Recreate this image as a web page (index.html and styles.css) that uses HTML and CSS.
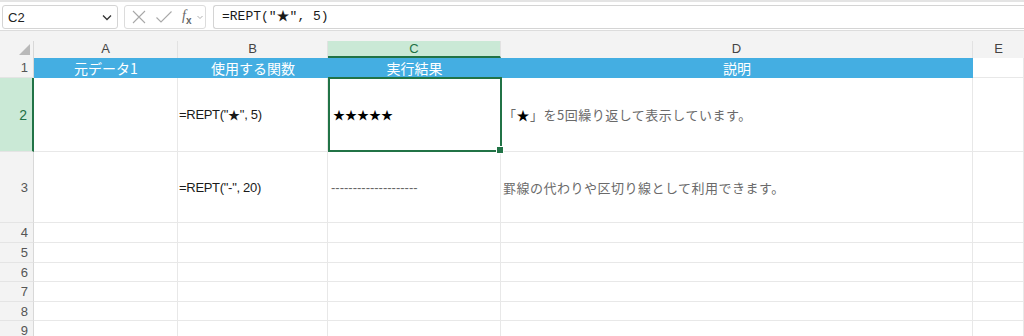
FILE: index.html
```html
<!DOCTYPE html>
<html lang="ja">
<head>
	<meta charset="UTF-8">
	<title>REPT関数</title>
	<link rel="stylesheet" href="styles.css">
</head>
<body>
	<!-- 数式バー -->
	<div class="toolbar">
		<div class="namebox">
			<span>C2</span>
			<svg class="chev" width="12" height="12" viewBox="0 0 12 12"><path d="M2 4.5 L6 8.5 L10 4.5" fill="none" stroke="#333" stroke-width="1.3"/></svg>
		</div>
		<div class="fxbox">
			<svg width="16" height="16" viewBox="0 0 16 16"><path d="M2 2 L14 14 M14 2 L2 14" stroke="#a8a8a8" stroke-width="1.1"/></svg>
			<svg width="18" height="16" viewBox="0 0 18 16"><path d="M1.5 8.5 L6 13 L16.5 2.5" fill="none" stroke="#a8a8a8" stroke-width="1.1"/></svg>
			<span class="fx">f<sub>x</sub></span>
			<svg width="8" height="8" viewBox="0 0 8 8"><path d="M1.5 3 L4 5.5 L6.5 3" fill="none" stroke="#b0b0b0" stroke-width="1"/></svg>
		</div>
		<div class="formula">=REPT("★", 5)</div>
	</div>

	<!-- シート -->
	<div class="sheet">
		<div class="grid">
			<!-- 列見出し -->
			<div class="corner"><span class="tri"></span></div>
			<div class="colhead">A</div>
			<div class="colhead">B</div>
			<div class="colhead sel">C</div>
			<div class="colhead">D</div>
			<div class="colhead last">E</div>

			<!-- 1行目 -->
			<div class="rowhead">1</div>
			<div class="cell title">元データ1</div>
			<div class="cell title">使用する関数</div>
			<div class="cell title">実行結果</div>
			<div class="cell title">説明</div>
			<div class="cell"></div>

			<!-- 2行目 -->
			<div class="rowhead sel">2</div>
			<div class="cell"></div>
			<div class="cell fn">=REPT("<span class="star">★</span>", 5)</div>
			<div class="cell active"><span class="stars">★★★★★</span></div>
			<div class="cell note">「<span class="dark">★</span>」を5回繰り返して表示しています。</div>
			<div class="cell"></div>

			<!-- 3行目 -->
			<div class="rowhead">3</div>
			<div class="cell"></div>
			<div class="cell fn">=REPT("-", 20)</div>
			<div class="cell dash">--------------------</div>
			<div class="cell note">罫線の代わりや区切り線として利用できます。</div>
			<div class="cell"></div>

			<div class="rowhead">4</div><div class="cell"></div><div class="cell"></div><div class="cell"></div><div class="cell"></div><div class="cell"></div>
			<div class="rowhead">5</div><div class="cell"></div><div class="cell"></div><div class="cell"></div><div class="cell"></div><div class="cell"></div>
			<div class="rowhead">6</div><div class="cell"></div><div class="cell"></div><div class="cell"></div><div class="cell"></div><div class="cell"></div>
			<div class="rowhead">7</div><div class="cell"></div><div class="cell"></div><div class="cell"></div><div class="cell"></div><div class="cell"></div>
			<div class="rowhead">8</div><div class="cell"></div><div class="cell"></div><div class="cell"></div><div class="cell"></div><div class="cell"></div>
			<div class="rowhead">9</div><div class="cell"></div><div class="cell"></div><div class="cell"></div><div class="cell"></div><div class="cell"></div>
		</div>
	</div>
</body>
</html>
```

FILE: styles.css
```css
*{
	margin: 0;
	padding: 0;
	box-sizing: border-box;
}
body{
	width: 1024px;
	height: 336px;
	overflow: hidden;
	background-color: #fff;
	font-family: "Liberation Sans", "Noto Sans CJK JP", sans-serif;
	color: #222;
}

/* 数式バー */
.toolbar{
	display: flex;
	align-items: center;
	height: 31px;
	padding: 2px 0 0 2px;
	border-top: 2px solid #e4e4e4;
	border-bottom: 1px solid #dcdcdc;
	background-color: #fff;
}
.namebox{
	display: flex;
	align-items: center;
	justify-content: space-between;
	width: 116px;
	height: 24px;
	padding: 0 4px 0 5px;
	border: 1px solid #d4d4d4;
	border-radius: 3px;
	font-size: 13px;
	color: #222;
}
.fxbox{
	display: flex;
	align-items: center;
	gap: 5px;
	width: 82px;
	height: 24px;
	margin-left: 6px;
	padding-left: 6px;
	border: 1px solid #dcdcdc;
	border-radius: 3px;
}
.fxbox svg:nth-child(2){
	margin-left: 3px;
}
.fx{
	margin-left: 4px;
	font-family: "Liberation Serif", serif;
	font-style: italic;
	font-size: 14px;
	color: #666;
}
.fx sub{
	font-size: 10px;
	font-style: normal;
	font-family: "Liberation Sans", sans-serif;
	font-weight: bold;
}
.formula{
	flex: 1;
	height: 24px;
	margin-left: 7px;
	padding-left: 8px;
	line-height: 22px;
	border: 1px solid #d4d4d4;
	border-right: none;
	border-radius: 3px 0 0 3px;
	font-family: "Liberation Mono", "Noto Sans CJK JP", monospace;
	font-size: 13px;
	color: #1a1a1a;
}

/* シート */
.sheet{
	padding-top: 10px;
	background-color: #f3f3f3;
}
.grid{
	display: grid;
	grid-template-columns: 34px 144px 150px 173px 472px 51px;
	grid-template-rows: 17px 20px 74px 71px 20px 20px 19px 20px 19px 20px;
}
.corner{
	position: relative;
	border-right: 1px solid #d8d8d8;
}
.corner .tri{
	position: absolute;
	right: 3px;
	bottom: 3px;
	width: 0;
	height: 0;
	border-left: 11px solid transparent;
	border-bottom: 11px solid #b9b9b9;
}
.colhead{
	font-size: 13px;
	line-height: 16px;
	text-align: center;
	color: #444;
	border-right: 1px solid #e2e2e2;
}
.colhead.last{
	border-right: none;
}
.colhead.sel{
	background-color: #cae9d6;
	color: #1e7145;
	border-bottom: 2px solid #217346;
}
.rowhead{
	display: flex;
	align-items: center;
	justify-content: flex-end;
	padding-right: 5px;
	font-size: 13px;
	color: #555;
	background-color: #f3f3f3;
	border-right: 1px solid #d8d8d8;
	border-bottom: 1px solid #e4e4e4;
}
.rowhead.sel{
	background-color: #cae9d6;
	color: #1e7145;
	font-size: 14px;
	border-right: 2px solid #217346;
}
.cell{
	display: flex;
	align-items: center;
	padding-left: 2px;
	background-color: #fff;
	border-right: 1px solid #e8e8e8;
	border-bottom: 1px solid #e8e8e8;
	font-size: 13px;
	white-space: nowrap;
	overflow: hidden;
}
.cell.title{
	justify-content: center;
	padding-left: 0;
	background-color: #44aee2;
	border-right: none;
	border-bottom: none;
	color: #fff;
	font-family: "Noto Sans CJK JP", sans-serif;
	font-size: 14px;
}
.cell.fn{
	padding-left: 1px;
	color: #1a1a1a;
	letter-spacing: -0.3px;
}
.star{
	font-family: "Noto Sans CJK JP", sans-serif;
	font-size: 12px;
}
.cell.active{
	position: relative;
	overflow: visible;
	padding-left: 3px;
	border: 2px solid #217346;
	margin: -1px -1px 0 0;
}
.cell.active::after{
	content: "";
	position: absolute;
	right: -4px;
	bottom: -4px;
	width: 6px;
	height: 6px;
	background-color: #217346;
	border: 1px solid #fff;
}
.stars{
	font-family: "Noto Sans CJK JP", sans-serif;
	font-size: 12px;
	color: #000;
}
.cell.dash{
	color: #666;
	padding-left: 3px;
}
.cell.note{
	padding-left: 2px;
	font-family: "Noto Sans CJK JP", sans-serif;
	font-size: 13px;
	letter-spacing: 0.5px;
	color: #6a6a6a;
}
.dark{
	color: #000;
}
```
